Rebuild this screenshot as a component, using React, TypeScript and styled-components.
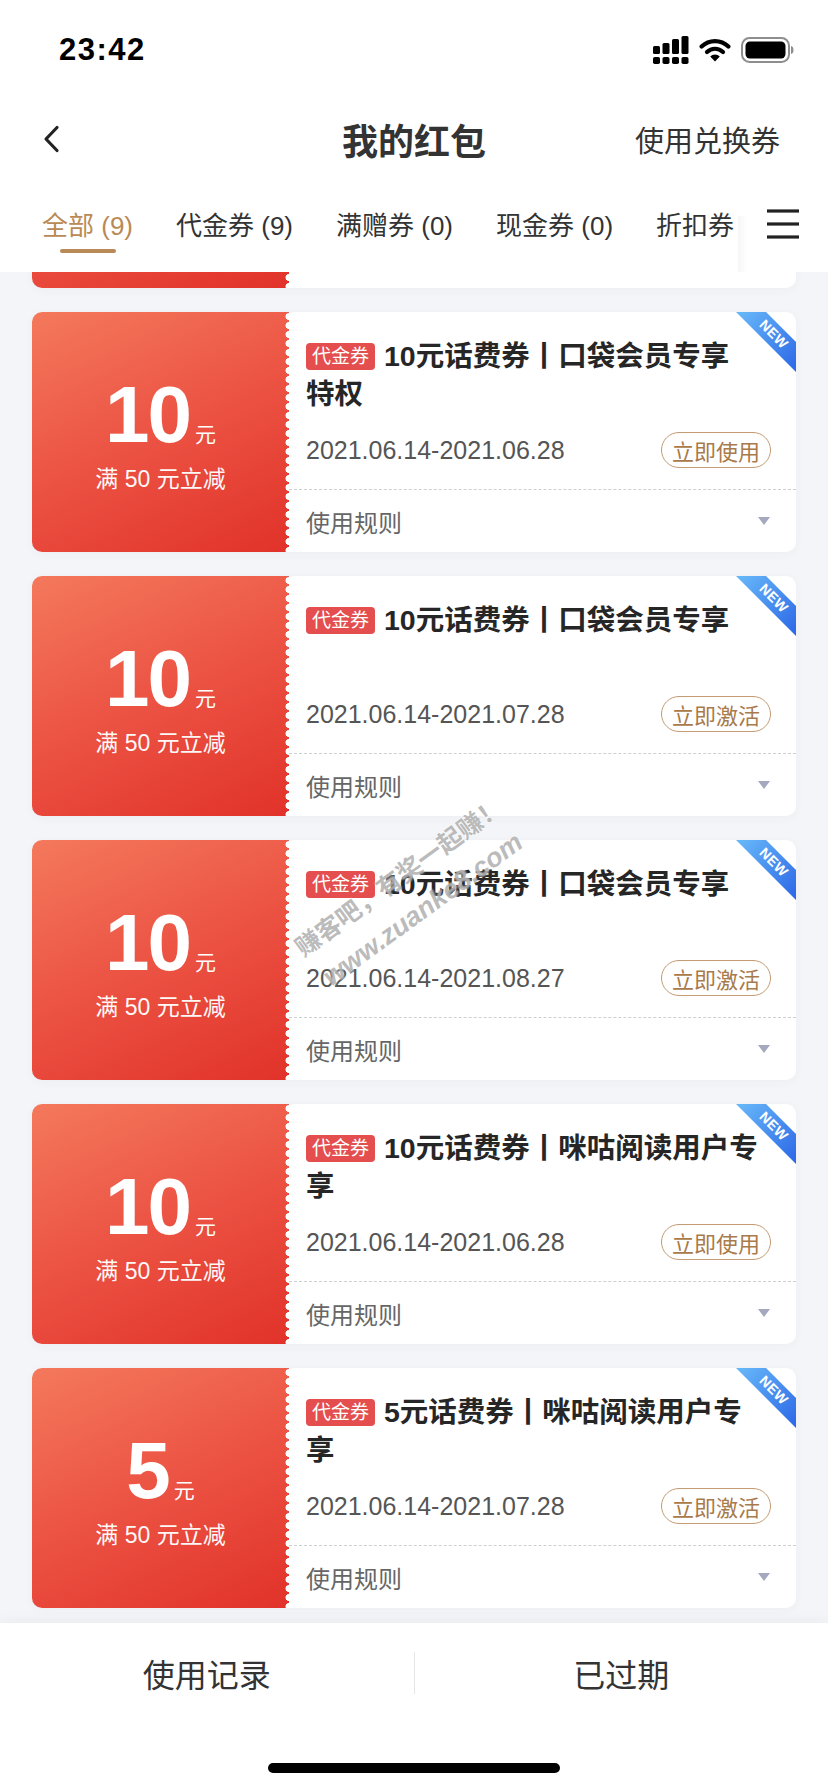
import React, { useLayoutEffect, useRef } from "react";
import styled, { createGlobalStyle } from "styled-components";

const GlobalStyle = createGlobalStyle`
  html, body { margin: 0; padding: 0; background: #fff; }
  body {
    font-family: "Liberation Sans", "Noto Sans CJK SC", sans-serif;
    -webkit-font-smoothing: antialiased;
  }
  #root { width: 828px; height: 1792px; overflow: hidden; }
`;

const Screen = styled.div`
  position: relative;
  width: 828px;
  height: 1792px;
  display: flex;
  flex-direction: column;
  background: #f4f5f8;
  overflow: hidden;
`;

const Header = styled.header`
  flex-shrink: 0;
  background: #fff;
  position: relative;
  z-index: 2;
`;

const StatusBar = styled.div`
  height: 100px;
  display: flex;
  align-items: center;
  justify-content: space-between;
  padding: 0 34px 0 59px;
`;

const Clock = styled.span`
  font-size: 31px;
  font-weight: 700;
  letter-spacing: 1.5px;
  color: #000;
`;

const StatusIcons = styled.div`
  display: flex;
  align-items: center;
  gap: 10px;
`;

const NavBar = styled.div`
  height: 78px;
  display: grid;
  grid-template-columns: 1fr auto 1fr;
  align-items: center;
`;

const BackButton = styled.div`
  padding-left: 42px;
  display: flex;
  align-items: center;
`;

const NavTitle = styled.h1`
  margin: 0;
  font-size: 36px;
  font-weight: 700;
  color: #333;
`;

const NavAction = styled.span`
  justify-self: end;
  padding-right: 48px;
  font-size: 29px;
  color: #333;
`;

const TabsBar = styled.div`
  height: 94px;
  display: flex;
`;

const TabScroller = styled.div`
  flex: 1;
  overflow: hidden;
  min-width: 0;
`;

const TabList = styled.div`
  display: flex;
  gap: 43px;
  padding-left: 42px;
  white-space: nowrap;
`;

const Tab = styled.div<{ $active?: boolean }>`
  display: flex;
  flex-direction: column;
  align-items: center;
  padding-top: 30px;
  font-size: 26px;
  line-height: 36px;
  color: ${(p) => (p.$active ? "#b98a55" : "#333")};
  flex-shrink: 0;
`;

const TabIndicator = styled.span<{ $active?: boolean }>`
  width: 56px;
  height: 4px;
  margin-top: 5px;
  border-radius: 2px;
  background: ${(p) => (p.$active ? "#b98a55" : "transparent")};
`;

const MenuButton = styled.div`
  width: 90px;
  flex-shrink: 0;
  display: flex;
  align-items: center;
  justify-content: center;
  padding-bottom: 2px;
  background: linear-gradient(180deg, #fff 40%, rgba(0, 0, 0, 0) 40%),
    linear-gradient(90deg, rgba(0, 0, 0, 0.035) 0, #fff 9px);
`;

const List = styled.div`
  flex: 1;
  min-height: 0;
  overflow-y: auto;
  scrollbar-width: none;
  &::-webkit-scrollbar { display: none; }
`;

const ListInner = styled.div`
  display: flex;
  flex-direction: column;
  gap: 24px;
  padding: 24px 32px;
`;

const Card = styled.div`
  position: relative;
  display: flex;
  height: 240px;
  flex-shrink: 0;
  background: #fff;
  border-radius: 10px;
  overflow: hidden;
  box-shadow: 0 2px 10px rgba(60, 70, 90, 0.04);
`;

const Face = styled.div`
  position: relative;
  width: 257px;
  flex-shrink: 0;
  display: flex;
  flex-direction: column;
  align-items: center;
  justify-content: center;
  padding-top: 4px;
  box-sizing: border-box;
  color: #fff;
  background: linear-gradient(155deg, #f4795c 0%, #ec5444 48%, #e1322a 100%);
  &::after {
    content: "";
    position: absolute;
    top: 0;
    bottom: 0;
    right: 0;
    width: 4px;
    background: radial-gradient(circle at 100% 50%, #fff 3.2px, transparent 3.8px) 0 0 / 4px 9px repeat-y;
  }
`;

const AmountRow = styled.div`
  display: flex;
  align-items: baseline;
  line-height: 1;
`;

const Amount = styled.span`
  font-size: 80px;
  font-weight: 700;
  letter-spacing: -2px;
`;

const Unit = styled.span`
  font-size: 21px;
  margin-left: 5px;
`;

const Condition = styled.div`
  margin-top: 9px;
  font-size: 23px;
  line-height: 30px;
  opacity: 0.96;
`;

const Body = styled.div`
  flex: 1;
  min-width: 0;
  display: flex;
  flex-direction: column;
`;

const Main = styled.div`
  flex: 1;
  display: flex;
  flex-direction: column;
  padding: 25px 25px 21px 17px;
`;

const Title = styled.div`
  font-size: 28.5px;
  font-weight: 700;
  line-height: 38px;
  color: #262626;
  white-space: pre;
`;

const Tag = styled.span`
  display: inline-block;
  vertical-align: 3px;
  height: 27px;
  line-height: 27px;
  padding: 0 6px;
  margin-right: 9px;
  border-radius: 4px;
  background: #e44e4e;
  color: #fff;
  font-size: 19px;
  font-weight: 400;
`;

const Meta = styled.div`
  margin-top: auto;
  display: flex;
  align-items: center;
  justify-content: space-between;
`;

const Period = styled.span`
  font-size: 25px;
  color: #555;
`;

const ActionPill = styled.span`
  height: 36px;
  box-sizing: border-box;
  display: inline-flex;
  align-items: center;
  padding: 0 10px;
  border: 1.5px solid #c49b72;
  border-radius: 18px;
  color: #a97a4a;
  font-size: 22px;
`;

const Rules = styled.div`
  height: 63px;
  box-sizing: border-box;
  border-top: 1px dashed #cfcfcf;
  display: flex;
  align-items: center;
  justify-content: space-between;
  padding: 0 26px 0 17px;
  font-size: 24px;
  color: #666;
`;

const Caret = styled.span`
  width: 0;
  height: 0;
  border-left: 6px solid transparent;
  border-right: 6px solid transparent;
  border-top: 8px solid #a5a8bf;
`;

const Ribbon = styled.div`
  position: absolute;
  top: 0;
  right: 0;
  width: 60px;
  height: 60px;
  background: linear-gradient(135deg, #68baf9 0%, #2b66e6 100%);
  clip-path: polygon(0 0, 30px 0, 100% 30px, 100% 100%);
`;

const RibbonText = styled.span`
  position: absolute;
  left: 38px;
  top: 22px;
  transform: translate(-50%, -50%) rotate(45deg);
  font-size: 14px;
  font-weight: 700;
  color: #fff;
  letter-spacing: 0.5px;
`;

const BottomBar = styled.footer`
  flex-shrink: 0;
  height: 169px;
  background: #fff;
  box-shadow: 0 -3px 12px rgba(0, 0, 0, 0.04);
  position: relative;
  z-index: 2;
  display: flex;
  flex-direction: column;
`;

const Actions = styled.div`
  height: 100px;
  display: flex;
  align-items: center;
`;

const ActionButton = styled.div`
  flex: 1;
  text-align: center;
  font-size: 32px;
  color: #333;
`;

const Divider = styled.span`
  width: 1px;
  height: 42px;
  background: #e6e6e6;
`;

const HomeArea = styled.div`
  display: flex;
  justify-content: center;
  padding-top: 40px;
`;

const HomeIndicator = styled.span`
  width: 292px;
  height: 10px;
  border-radius: 5px;
  background: #000;
`;

const Watermark = styled.div`
  position: absolute;
  left: 411px;
  top: 893px;
  transform: translate(-50%, -50%) rotate(-36deg);
  display: flex;
  flex-direction: column;
  align-items: center;
  pointer-events: none;
  z-index: 1;
  color: rgba(120, 120, 120, 0.5);
  font-weight: 700;
  line-height: 40px;
  white-space: nowrap;
  text-shadow: 0 0 2px rgba(255, 255, 255, 0.95);
`;

const WatermarkLine = styled.span<{ $italic?: boolean }>`
  font-size: ${(p) => (p.$italic ? "27px" : "25px")};
  font-style: ${(p) => (p.$italic ? "italic" : "normal")};
`;

const SignalIcon = () => (
  <svg width="36" height="29" viewBox="0 0 36 29">
    {[10, 7, 3, 0].map((top, i) => (
      <g key={i} fill="#000">
        <rect x={i * 9.5} y={top} width="7" height={18 - top} rx="1.5" />
        <rect x={i * 9.5} y="21" width="7" height="7" rx="1.8" />
      </g>
    ))}
  </svg>
);

const WifiIcon = () => (
  <svg width="32" height="24" viewBox="0 0 32 24">
    <path d="M2.6 8.6 A19 19 0 0 1 29.4 8.6" stroke="#000" strokeWidth="4.2" fill="none" strokeLinecap="round" />
    <path d="M8 14 A11.5 11.5 0 0 1 24 14" stroke="#000" strokeWidth="4.2" fill="none" strokeLinecap="round" />
    <path d="M16 23.5 L11.2 18.6 A6.8 6.8 0 0 1 20.8 18.6 Z" fill="#000" />
  </svg>
);

const BatteryIcon = () => (
  <svg width="53" height="26" viewBox="0 0 53 26">
    <rect x="1" y="1" width="47" height="24" rx="7.5" fill="none" stroke="#8e8e8e" strokeWidth="2" />
    <rect x="4.5" y="4.5" width="40" height="17" rx="4.5" fill="#000" />
    <path d="M50 9 Q52.5 9.5 52.5 13 Q52.5 16.5 50 17 Z" fill="#8e8e8e" />
  </svg>
);

const BackIcon = () => (
  <svg width="20" height="30" viewBox="0 0 20 30">
    <polyline points="15,3.5 4,15 15,26.5" fill="none" stroke="#222" strokeWidth="3.2" strokeLinecap="round" strokeLinejoin="round" />
  </svg>
);

const MenuIcon = () => (
  <svg width="32" height="30" viewBox="0 0 32 30">
    <g stroke="#222" strokeWidth="3.2">
      <line x1="0" y1="2" x2="32" y2="2" />
      <line x1="0" y1="15" x2="32" y2="15" />
      <line x1="0" y1="28" x2="32" y2="28" />
    </g>
  </svg>
);

type Coupon = {
  amount: string;
  title: string;
  period: string;
  action: string;
};

const coupons: Coupon[] = [
  { amount: "10", title: "10元话费券丨口袋会员专享", period: "2021.06.14-2021.06.28", action: "立即使用" },
  { amount: "10", title: "10元话费券丨口袋会员专享\n特权", period: "2021.06.14-2021.06.28", action: "立即使用" },
  { amount: "10", title: "10元话费券丨口袋会员专享", period: "2021.06.14-2021.07.28", action: "立即激活" },
  { amount: "10", title: "10元话费券丨口袋会员专享", period: "2021.06.14-2021.08.27", action: "立即激活" },
  { amount: "10", title: "10元话费券丨咪咕阅读用户专\n享", period: "2021.06.14-2021.06.28", action: "立即使用" },
  { amount: "5", title: "5元话费券丨咪咕阅读用户专\n享", period: "2021.06.14-2021.07.28", action: "立即激活" },
  { amount: "5", title: "5元话费券丨咪咕阅读用户专\n享", period: "2021.06.14-2021.06.28", action: "立即使用" },
  { amount: "5", title: "5元话费券丨口袋会员专享", period: "2021.06.14-2021.07.28", action: "立即激活" },
  { amount: "5", title: "5元话费券丨口袋会员专享", period: "2021.06.14-2021.08.27", action: "立即激活" },
];

const tabs = [
  { label: "全部 (9)", active: true },
  { label: "代金券 (9)" },
  { label: "满赠券 (0)" },
  { label: "现金券 (0)" },
  { label: "折扣券 (0)" },
];

const CouponCard = ({ c }: { c: Coupon }) => (
  <Card>
    <Face>
      <AmountRow>
        <Amount>{c.amount}</Amount>
        <Unit>元</Unit>
      </AmountRow>
      <Condition>满 50 元立减</Condition>
    </Face>
    <Body>
      <Main>
        <Title>
          <Tag>代金券</Tag>
          {c.title}
        </Title>
        <Meta>
          <Period>{c.period}</Period>
          <ActionPill>{c.action}</ActionPill>
        </Meta>
      </Main>
      <Rules>
        <span>使用规则</span>
        <Caret />
      </Rules>
    </Body>
    <Ribbon>
      <RibbonText>NEW</RibbonText>
    </Ribbon>
  </Card>
);

export default function App() {
  const listRef = useRef<HTMLDivElement>(null);
  useLayoutEffect(() => {
    if (listRef.current) listRef.current.scrollTop = 248;
  }, []);

  return (
    <>
      <GlobalStyle />
      <Screen>
        <Header>
          <StatusBar>
            <Clock>23:42</Clock>
            <StatusIcons>
              <SignalIcon />
              <WifiIcon />
              <BatteryIcon />
            </StatusIcons>
          </StatusBar>
          <NavBar>
            <BackButton>
              <BackIcon />
            </BackButton>
            <NavTitle>我的红包</NavTitle>
            <NavAction>使用兑换券</NavAction>
          </NavBar>
          <TabsBar>
            <TabScroller>
              <TabList>
                {tabs.map((t) => (
                  <Tab key={t.label} $active={t.active}>
                    <span>{t.label}</span>
                    <TabIndicator $active={t.active} />
                  </Tab>
                ))}
              </TabList>
            </TabScroller>
            <MenuButton>
              <MenuIcon />
            </MenuButton>
          </TabsBar>
        </Header>
        <List ref={listRef}>
          <ListInner>
            {coupons.map((c, i) => (
              <CouponCard key={i} c={c} />
            ))}
          </ListInner>
        </List>
        <BottomBar>
          <Actions>
            <ActionButton>使用记录</ActionButton>
            <Divider />
            <ActionButton>已过期</ActionButton>
          </Actions>
          <HomeArea>
            <HomeIndicator />
          </HomeArea>
        </BottomBar>
        <Watermark>
          <WatermarkLine>赚客吧，有奖一起赚！</WatermarkLine>
          <WatermarkLine $italic>www.zuanke8.com</WatermarkLine>
        </Watermark>
      </Screen>
    </>
  );
}
